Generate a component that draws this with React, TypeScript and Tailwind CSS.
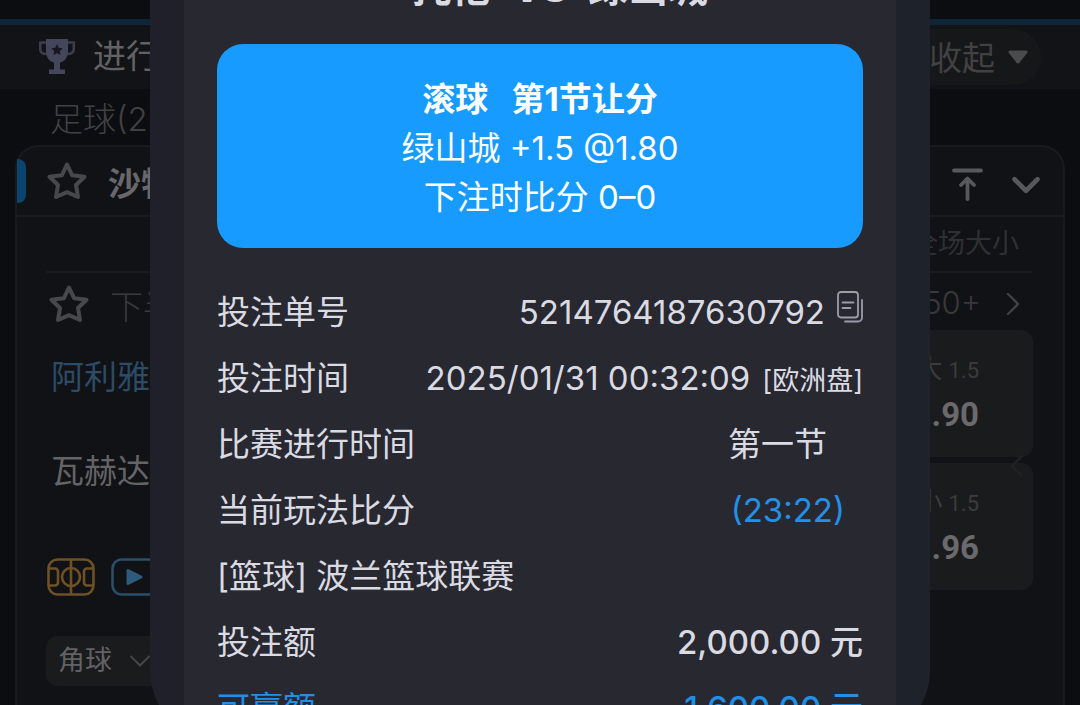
import type { ReactNode } from 'react';
import { ChevronDown, ChevronLeft, ChevronRight } from 'lucide-react';

function TrophyIcon() {
  return (
    <svg viewBox="0 0 38 38" className="h-[38px] w-[38px]" aria-hidden="true">
      <path d="M8 4.500H2.200V11c0 3 2.500 5 6.800 5M30 4.500h5.800V11c0 3-2.500 5-6.800 5" fill="none" stroke="#3b3d4f" strokeWidth="2.600" />
      <path d="M8 1h22v12c0 7-4 12-11 12S8 20 8 13z" fill="#44475c" />
      <path d="M16 24h6v8h-6zM11 31.500h16V36H11z" fill="#44475c" />
      <path d="M19 6l1.800 3.700 4 .6-2.900 2.800.7 4-3.600-1.900-3.600 1.900.7-4-2.900-2.800 4-.6z" fill="#181920" />
    </svg>
  );
}

function StarIcon() {
  return (
    <svg viewBox="0 0 42 40" className="h-10 w-[42px]" fill="none" stroke="#47484b" strokeWidth="4" strokeLinejoin="round" aria-hidden="true">
      <path d="M21 3.500l5.200 10.800 12.300 1.400-8.500 8.300 2 12L21 31.200 10 36l2-12-8.500-8.300 12.300-1.400z" />
    </svg>
  );
}

function PitchIcon() {
  return (
    <svg viewBox="0 0 48 38" className="h-[38px] w-12" fill="none" stroke="#6f5125" strokeWidth="2.600" aria-hidden="true">
      <rect x="1.500" y="1.500" width="45" height="35" rx="9" />
      <path d="M24 2v34M2 10.500h6a3 3 0 0 1 3 3v11a3 3 0 0 1-3 3H2M46 10.500h-6a3 3 0 0 0-3 3v11a3 3 0 0 0 3 3h6" />
      <circle cx="24" cy="19" r="9" />
    </svg>
  );
}

function PlayIcon() {
  return (
    <svg viewBox="0 0 48 38" className="h-[38px] w-12" aria-hidden="true">
      <rect x="1.500" y="1.500" width="45" height="35" rx="9" fill="none" stroke="#284f6b" strokeWidth="2.600" />
      <path d="M17 12.500v13l13-6.500z" fill="#2d5b7e" stroke="#2d5b7e" strokeWidth="3" strokeLinejoin="round" />
    </svg>
  );
}

function ToTopIcon() {
  return (
    <svg viewBox="0 0 32 36" className="h-9 w-8" fill="none" stroke="#58585b" strokeWidth="3.800" strokeLinecap="round" strokeLinejoin="round" aria-hidden="true">
      <path d="M3 3.500h27M16.500 32V12M10 18l6.500-6.500L23 18" />
    </svg>
  );
}

function CopyIcon() {
  return (
    <svg viewBox="0 0 26 32" className="h-8 w-[26px]" fill="none" stroke="#9c9ca8" strokeWidth="1.800" strokeLinecap="round" aria-hidden="true">
      <rect x="1" y="1" width="20" height="25.500" rx="3" />
      <path d="M25 9v17.500a4 4 0 0 1-4 4H8M5.500 11.500h11M5.500 17h8" />
    </svg>
  );
}

function OddsCell({ label, line, odds }: { label: string; line: string; odds: string }) {
  return (
    <button className="flex h-[127px] w-44 flex-col items-end justify-center rounded-xl bg-[#1a1b1d] pr-[54px] pb-1 font-['Roboto','Noto_Sans_CJK_SC',sans-serif]">
      <span className="flex items-baseline gap-1.5 text-[26px] leading-[44px] text-[#3b3b3e]">
        {label}
        <span className="text-[22px]">{line}</span>
      </span>
      <span className="text-[33px] leading-[44px] font-bold text-[#6a6a6c]">{odds}</span>
    </button>
  );
}

function MatchPage() {
  return (
    <main className="flex h-full flex-col">
      <div className="h-[19px]" />
      <header className="flex h-[70px] items-center border-t-6 border-[#0f2639] bg-[#121316] pr-[39px] pl-[38px]">
        <TrophyIcon />
        <h1 className="ml-[17px] flex-1 text-[33px] text-[#626264]">进行中</h1>
        <button className="flex h-14 items-center gap-3 rounded-full bg-[#161719] pr-3 pl-8 text-[33px] text-[#414143]">
          <span className="pt-1">收起</span>
          <svg viewBox="0 0 22 16" className="h-4 w-[22px]" aria-hidden="true">
            <path d="M3 3h16l-8 10z" fill="#4b4b4d" stroke="#4b4b4d" strokeWidth="3" strokeLinejoin="round" />
          </svg>
        </button>
      </header>
      <p className="h-14 pl-[50px] text-[33px] leading-[60px] font-light text-[#414144]">足球(22)</p>

      <section className="mx-[15px] flex flex-1 flex-col rounded-t-3xl border-2 border-b-0 border-[#191a1d] bg-[#111215]">
        <div className="flex h-[70px] items-center border-b-2 border-[#191a1d] pr-3.5">
          <span className="h-11 w-[9px] rounded-r-lg bg-[#0b456f]" />
          <button aria-label="收藏联赛" className="ml-5">
            <StarIcon />
          </button>
          <h2 className="ml-5 flex-1 pt-2 text-[33px] font-bold text-[#68686a]">沙特联赛</h2>
          <button aria-label="置顶" className="pt-2">
            <ToTopIcon />
          </button>
          <button aria-label="折叠" className="ml-5 pt-2">
            <ChevronDown className="h-[46px] w-[46px]" color="#58585b" strokeWidth={2.400} />
          </button>
        </div>

        <div className="mr-[30px] ml-[29px]">
          <p className="h-14 border-b-2 border-[#191a1d] pr-3.5 text-right text-[27px] leading-[54px] text-[#2f3032]">全场大小</p>
          <div className="flex h-[57px] items-center pt-1">
            <button aria-label="收藏比赛" className="ml-0.5">
              <StarIcon />
            </button>
            <span className="ml-5 flex-1 pt-2 text-[33px] font-light text-[#3b3b3e]">下半场</span>
            <a href="#more" className="flex items-center gap-3 text-[31px] font-light text-[#39393c]">
              50+
              <ChevronRight className="h-10 w-10" color="#434345" strokeWidth={1.400} />
            </a>
          </div>
          <div className="flex justify-between">
            <div className="pl-[5px] text-[33px] leading-[94px]">
              <p className="text-[#2b4b66]">阿利雅德</p>
              <p className="text-[#646466]">瓦赫达</p>
            </div>
            <div className="relative flex flex-col gap-1.5">
              <OddsCell label="大" line="1.5" odds="1.90" />
              <OddsCell label="小" line="1.5" odds="1.96" />
              <ChevronLeft className="absolute top-[116px] -right-1 h-10 w-10" color="#202123" strokeWidth={1.500} />
            </div>
          </div>
          <div className="-mt-8 ml-px flex gap-4">
            <button aria-label="球场">
              <PitchIcon />
            </button>
            <button aria-label="直播">
              <PlayIcon />
            </button>
          </div>
          <button className="mt-10 flex h-[50px] items-center gap-2.5 rounded-xl bg-[#1a1b1d] px-3 text-[27px] text-[#626264]">
            角球
            <ChevronDown className="h-9 w-9" color="#47474a" strokeWidth={1.200} />
          </button>
        </div>
      </section>
    </main>
  );
}

function Row({ label, children }: { label: string; children?: ReactNode }) {
  return (
    <div className="flex h-[66px] items-center justify-between">
      <dt>{label}</dt>
      <dd className="flex items-center">{children}</dd>
    </div>
  );
}

function BetSlip() {
  return (
    <div
      role="dialog"
      aria-label="注单详情"
      className="w-full max-w-[780px] overflow-hidden rounded-b-[72px] bg-linear-to-r from-[#1f2029] to-[#1e222b] px-[34px]"
    >
      <div className="bg-[#282830] px-[33px] text-[33px] text-[#dadae2]">
        <h2 className="flex h-[84px] justify-center gap-5 pl-10 text-[40px] leading-[56px] font-bold">
          <span>托伦</span>
          <span>VS</span>
          <span>绿山城</span>
        </h2>
        <div className="rounded-[26px] bg-[#189bff] pt-[31px] pb-[26px] text-center leading-[49px] text-white">
          <p className="font-bold whitespace-pre">滚球   第1节让分</p>
          <p>绿山城 +1.5 @1.80</p>
          <p>下注时比分 0–0</p>
        </div>
        <dl className="pt-8">
          <Row label="投注单号">
            5214764187630792
            <button aria-label="复制" className="ml-3 pb-3">
              <CopyIcon />
            </button>
          </Row>
          <Row label="投注时间">
            2025/01/31 00:32:09
            <span className="ml-3 pt-1 text-[27px]">[欧洲盘]</span>
          </Row>
          <Row label="比赛进行时间">
            <span className="mr-9">第一节</span>
          </Row>
          <Row label="当前玩法比分">
            <span className="mr-[18px] text-[#2390e8]">(23:22)</span>
          </Row>
          <Row label="[篮球] 波兰篮球联赛" />
          <Row label="投注额">
            <span className="font-medium">2,000.00 元</span>
          </Row>
          <div className="text-[#1f8fe8]">
            <Row label="可赢额">
              <span className="font-medium">1,600.00 元</span>
            </Row>
          </div>
        </dl>
      </div>
    </div>
  );
}

export default function App() {
  return (
    <div className="relative h-screen overflow-hidden bg-[#0c0d11] font-['Inter','Noto_Sans_CJK_SC',sans-serif]">
      <MatchPage />
      <div className="absolute inset-x-0 -top-10 flex justify-center">
        <BetSlip />
      </div>
    </div>
  );
}
